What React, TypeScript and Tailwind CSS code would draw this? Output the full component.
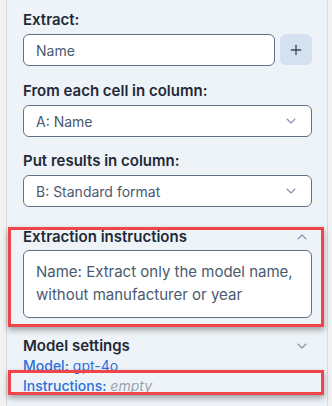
import { ChevronDown, ChevronUp, Plus } from "lucide-react";

function SelectBox({ value }: { value: string }) {
  return (
    <div className="mt-1 flex h-8 items-center justify-between rounded-md border border-[#5f7189] bg-white pl-3 pr-3">
      <span className="text-[14px] text-[#4a5a6f]">{value}</span>
      <ChevronDown className="h-4 w-4 text-[#8394aa]" strokeWidth={1.6} />
    </div>
  );
}

export default function App() {
  return (
    <div
      className="relative flex h-[406px] w-[332px] overflow-hidden bg-[#f2f2f2]"
      style={{ fontFamily: "Inter, 'Noto Sans', sans-serif" }}
    >
      <div className="w-[6px]" />
      <div className="flex-1 border-x border-[#dadada] bg-[#eef3f8] pl-[16px] pr-[15px] pt-[10px]">
        {/* Extract */}
        <div className="text-[15px] font-semibold leading-5 text-[#1f2937]">Extract:</div>
        <div className="mt-1 flex gap-[5px]">
          <div className="flex h-8 flex-1 items-center rounded-md border border-[#5f7189] bg-white px-3 text-[14px] text-[#4a5a6f]">
            Name
          </div>
          <button className="flex h-[31px] w-8 items-center justify-center rounded-md bg-[#d5e1f0] text-[#3b4a5e]">
            <Plus className="h-4 w-4" strokeWidth={2} />
          </button>
        </div>

        {/* Source column */}
        <div className="mt-[15px] text-[15px] font-semibold leading-5 text-[#1f2937]">
          From each cell in column:
        </div>
        <SelectBox value="A: Name" />

        {/* Target column */}
        <div className="mt-[14px] text-[15px] font-semibold leading-5 text-[#1f2937]">
          Put results in column:
        </div>
        <SelectBox value="B: Standard format" />

        {/* Extraction instructions */}
        <div className="mt-[19px] flex items-center justify-between">
          <span className="text-[15px] font-semibold leading-[22px] text-[#1f2937]">
            Extraction instructions
          </span>
          <ChevronUp className="mr-[2px] h-4 w-4 text-[#8394aa]" strokeWidth={1.6} />
        </div>
        <div className="mt-[2px] h-[68px] rounded-md border border-[#5f7189] bg-white px-3 py-[9px] text-[15px] leading-[23px] text-[#4a5a6f]">
          Name: Extract only the model name, without manufacturer or year
        </div>

        {/* Model settings */}
        <div className="mt-[18px] flex items-center justify-between">
          <span className="text-[15px] font-semibold leading-[20px] text-[#1f2937]">
            Model settings
          </span>
          <ChevronDown className="mr-[2px] h-4 w-4 text-[#8394aa]" strokeWidth={1.6} />
        </div>
        <div className="text-[14px] leading-[20px] text-[#2f6fdc]">
          <span className="font-medium">Model:</span> gpt-4o
        </div>
        <div className="text-[14px] leading-[20px] text-[#2f6fdc]">
          <span className="font-medium">Instructions:</span>{" "}
          <span className="italic text-[#9aa3ae]">empty</span>
        </div>
      </div>
      <div className="w-[4px]" />

      {/* annotation highlights */}
      <div className="pointer-events-none absolute left-[8px] top-[227px] h-[100px] w-[316px] border-[3px] border-[#f0434a] shadow-[0_3px_6px_rgba(0,0,0,0.35)]" />
      <div className="pointer-events-none absolute left-[8px] top-[370px] h-[25px] w-[316px] border-[3px] border-[#f0434a] shadow-[0_3px_6px_rgba(0,0,0,0.35)]" />
    </div>
  );
}
